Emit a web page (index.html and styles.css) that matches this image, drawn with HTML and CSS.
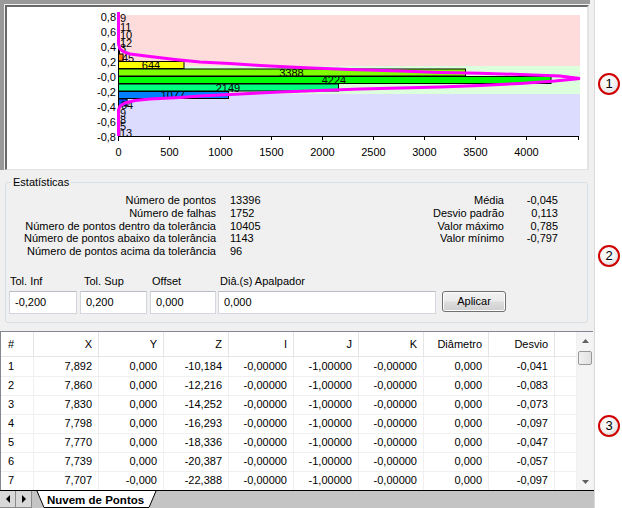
FILE: index.html
```html
<!DOCTYPE html>
<html lang="pt">
<head>
<meta charset="utf-8">
<title>Nuvem de Pontos</title>
<link rel="stylesheet" href="styles.css">
</head>
<body>
<div class="screen">
  <div class="app">
    <div class="chart-pane">
      <div class="chart-box">
        <svg class="chart" width="580" height="162" viewBox="7 7 580 162">
          <rect x="118" y="15" width="462" height="51" fill="#ffdcdc"/>
          <rect x="118" y="66" width="462" height="28" fill="#dcffdc"/>
          <rect x="118" y="94" width="462" height="42" fill="#dcdcff"/>
          <g stroke="#000" stroke-width="1">
            <rect x="118.5" y="16.5" width="1" height="7" fill="#ff4000"/>
            <rect x="118.5" y="24" width="1" height="7" fill="#ff4000"/>
            <rect x="118.5" y="31.5" width="1" height="7" fill="#ff4000"/>
            <rect x="118.5" y="39" width="1" height="7" fill="#ff4000"/>
            <rect x="118.5" y="46.5" width="1" height="7" fill="#ff6000"/>
            <rect x="118.5" y="54" width="4.6" height="7" fill="#ff8000"/>
            <rect x="118.5" y="61.5" width="65.5" height="7" fill="#ffff00"/>
            <rect x="118.5" y="69" width="347" height="7" fill="#80ff00"/>
            <rect x="118.5" y="76.5" width="432.5" height="7" fill="#00ff00"/>
            <rect x="118.5" y="84" width="220" height="7" fill="#00ff80"/>
            <rect x="118.5" y="91.5" width="110" height="7" fill="#0080ff"/>
            <rect x="118.5" y="99" width="8.6" height="7" fill="#0050ff"/>
            <rect x="118.5" y="106.5" width="1" height="7" fill="#0040ff"/>
            <rect x="118.5" y="114" width="1" height="7" fill="#0030ff"/>
            <rect x="118.5" y="121.5" width="1" height="7" fill="#0020ff"/>
            <rect x="118.5" y="129" width="1.3" height="7" fill="#0000ff"/>
          </g>
          <g class="bar-label">
            <text x="120" y="22">9</text>
            <text x="120" y="31">11</text>
            <text x="120" y="39">10</text>
            <text x="120" y="47">12</text>
            <text x="120" y="52">3</text>
            <text x="122" y="62">45</text>
            <text x="151" y="69" text-anchor="middle">644</text>
            <text x="291.5" y="77" text-anchor="middle">3388</text>
            <text x="334" y="84" text-anchor="middle">4224</text>
            <text x="228" y="92" text-anchor="middle">2149</text>
            <text x="173" y="99" text-anchor="middle">1077</text>
            <text x="121" y="109">84</text>
            <text x="120" y="117">9</text>
            <text x="120" y="124">8</text>
            <text x="120" y="130">5</text>
            <text x="120" y="137">13</text>
          </g>
          <polyline fill="none" stroke="#ff00ff" stroke-width="3"
            points="118.5,12 118.5,44 120,49 124,52 130,54 150,56.5 175,59.5 200,62 230,63.5 260,65.5 300,67.5 350,69.5 400,71 440,72.5 480,73.2 520,74.5 560,76 580,78.5 555,81 520,83.5 480,85.5 440,87 400,88 360,89 320,90.5 280,92 250,93.5 220,95 200,96 180,97.5 150,99 135,100.5 125,103 120,106 118.5,110 118.5,136"/>
          <g stroke="#000" stroke-width="1">
            <line x1="118" y1="136.5" x2="579" y2="136.5"/>
            <line x1="118.5" y1="136" x2="118.5" y2="141"/>
            <line x1="169.5" y1="136" x2="169.5" y2="140"/>
            <line x1="220.5" y1="136" x2="220.5" y2="140"/>
            <line x1="271.5" y1="136" x2="271.5" y2="140"/>
            <line x1="322.5" y1="136" x2="322.5" y2="140"/>
            <line x1="373.5" y1="136" x2="373.5" y2="140"/>
            <line x1="424.5" y1="136" x2="424.5" y2="140"/>
            <line x1="475.5" y1="136" x2="475.5" y2="140"/>
            <line x1="526.5" y1="136" x2="526.5" y2="140"/>
            <line x1="578.5" y1="136" x2="578.5" y2="140"/>
          </g>
          <g class="axis-label" text-anchor="end">
            <text x="116" y="20.5">0,8</text>
            <text x="116" y="35.5">0,6</text>
            <text x="116" y="50.5">0,4</text>
            <text x="116" y="65.5">0,2</text>
            <text x="116" y="80.5">-0,0</text>
            <text x="116" y="95.5">-0,2</text>
            <text x="116" y="110.5">-0,4</text>
            <text x="116" y="125.5">-0,6</text>
            <text x="116" y="140.5">-0,8</text>
          </g>
          <g class="axis-label" text-anchor="middle">
            <text x="118.5" y="156">0</text>
            <text x="169.5" y="156">500</text>
            <text x="220.5" y="156">1000</text>
            <text x="271.5" y="156">1500</text>
            <text x="322.5" y="156">2000</text>
            <text x="373.5" y="156">2500</text>
            <text x="424.5" y="156">3000</text>
            <text x="475.5" y="156">3500</text>
            <text x="526.5" y="156">4000</text>
          </g>
        </svg>
      </div>
    </div>

    <div class="stats-pane">
      <fieldset class="group">
        <legend>Estatísticas</legend>
        <div class="stats">
          <div class="stats-left">
            <span class="lbl">Número de pontos</span><span class="val">13396</span>
            <span class="lbl">Número de falhas</span><span class="val">1752</span>
            <span class="lbl">Número de pontos dentro da tolerância</span><span class="val">10405</span>
            <span class="lbl">Número de pontos abaixo da tolerância</span><span class="val">1143</span>
            <span class="lbl">Número de pontos acima da tolerância</span><span class="val">96</span>
          </div>
          <div class="stats-right">
            <span class="lbl">Média</span><span class="val">-0,045</span>
            <span class="lbl">Desvio padrão</span><span class="val">0,113</span>
            <span class="lbl">Valor máximo</span><span class="val">0,785</span>
            <span class="lbl">Valor mínimo</span><span class="val">-0,797</span>
          </div>
        </div>
        <div class="fields">
          <label class="field f1"><span class="flabel">Tol. Inf</span><span class="input">-0,200</span></label>
          <label class="field f2"><span class="flabel">Tol. Sup</span><span class="input">0,200</span></label>
          <label class="field f3"><span class="flabel">Offset</span><span class="input">0,000</span></label>
          <label class="field f4"><span class="flabel">Diâ.(s) Apalpador</span><span class="input">0,000</span></label>
          <button class="btn" type="button">Aplicar</button>
        </div>
      </fieldset>
    </div>

    <div class="table-pane">
      <div class="grid">
        <div class="row head">
          <div class="c first">#</div><div class="c">X</div><div class="c">Y</div><div class="c">Z</div><div class="c">I</div><div class="c">J</div><div class="c">K</div><div class="c">Diâmetro</div><div class="c">Desvio</div><div class="c fill"></div>
        </div>
        <div class="row">
          <div class="c first">1</div><div class="c">7,892</div><div class="c">0,000</div><div class="c">-10,184</div><div class="c">-0,00000</div><div class="c">-1,00000</div><div class="c">-0,00000</div><div class="c">0,000</div><div class="c">-0,041</div><div class="c fill"></div>
        </div>
        <div class="row">
          <div class="c first">2</div><div class="c">7,860</div><div class="c">0,000</div><div class="c">-12,216</div><div class="c">-0,00000</div><div class="c">-1,00000</div><div class="c">-0,00000</div><div class="c">0,000</div><div class="c">-0,083</div><div class="c fill"></div>
        </div>
        <div class="row">
          <div class="c first">3</div><div class="c">7,830</div><div class="c">0,000</div><div class="c">-14,252</div><div class="c">-0,00000</div><div class="c">-1,00000</div><div class="c">-0,00000</div><div class="c">0,000</div><div class="c">-0,073</div><div class="c fill"></div>
        </div>
        <div class="row">
          <div class="c first">4</div><div class="c">7,798</div><div class="c">0,000</div><div class="c">-16,293</div><div class="c">-0,00000</div><div class="c">-1,00000</div><div class="c">-0,00000</div><div class="c">0,000</div><div class="c">-0,097</div><div class="c fill"></div>
        </div>
        <div class="row">
          <div class="c first">5</div><div class="c">7,770</div><div class="c">0,000</div><div class="c">-18,336</div><div class="c">-0,00000</div><div class="c">-1,00000</div><div class="c">-0,00000</div><div class="c">0,000</div><div class="c">-0,047</div><div class="c fill"></div>
        </div>
        <div class="row">
          <div class="c first">6</div><div class="c">7,739</div><div class="c">0,000</div><div class="c">-20,387</div><div class="c">-0,00000</div><div class="c">-1,00000</div><div class="c">-0,00000</div><div class="c">0,000</div><div class="c">-0,057</div><div class="c fill"></div>
        </div>
        <div class="row">
          <div class="c first">7</div><div class="c">7,707</div><div class="c">-0,000</div><div class="c">-22,388</div><div class="c">-0,00000</div><div class="c">-1,00000</div><div class="c">-0,00000</div><div class="c">0,000</div><div class="c">-0,097</div><div class="c fill"></div>
        </div>
      </div>
      <div class="vscroll">
        <div class="sb-btn"><svg width="7" height="4" viewBox="0 0 7 4"><path d="M0 4 L3.5 0 L7 4 Z" fill="#606060"/></svg></div>
        <div class="sb-track"><div class="sb-thumb"></div></div>
        <div class="sb-btn"><svg width="7" height="4" viewBox="0 0 7 4"><path d="M0 0 L3.5 4 L7 0 Z" fill="#606060"/></svg></div>
      </div>
    </div>

    <div class="tabbar">
      <div class="nav"><svg width="6" height="8" viewBox="0 0 6 8"><path d="M5 0 L1 4 L5 8 Z" fill="#000"/></svg></div>
      <div class="nav"><svg width="6" height="8" viewBox="0 0 6 8"><path d="M1 0 L5 4 L1 8 Z" fill="#000"/></svg></div>
      <svg class="tab" width="124" height="17" viewBox="0 0 124 17">
        <polygon points="1,0 8,17 113,17 120,0" fill="#fff"/>
        <polyline points="1,0 8,16.5 113,16.5 120,0" fill="none" stroke="#000" stroke-width="1"/>
        <text x="11" y="13" class="tab-text">Nuvem de Pontos</text>
      </svg>
    </div>
  </div>

  <div class="callouts">
    <div class="badge b1">1</div>
    <div class="badge b2">2</div>
    <div class="badge b3">3</div>
  </div>
</div>
</body>
</html>
```

FILE: styles.css
```css
* { box-sizing: border-box; }
html, body { margin: 0; padding: 0; }
body {
  width: 622px;
  height: 508px;
  overflow: hidden;
  background: #fff;
  font-family: "Liberation Sans", Arial, sans-serif;
  font-size: 11px;
  color: #000;
}
.screen { display: flex; height: 508px; }
.app {
  width: 595px;
  height: 508px;
  display: flex;
  flex-direction: column;
  background: #f0f0f0;
  border-right: 1px solid #dadada;
}

/* chart */
.chart-pane {
  height: 170px;
  width: 590px;
  border-top: 4px solid #9a9a9a;
  border-left: 4px solid #9a9a9a;
  padding: 1px 1px 0 1px;
  background: #f0f0f0;
}
.chart-box {
  height: 165px;
  border-top: 2px solid #696969;
  border-left: 2px solid #696969;
  border-right: 2px solid #e3e3e3;
  border-bottom: 1px solid #e3e3e3;
  background: #fff;
  overflow: hidden;
}
.chart { display: block; }
.bar-label text, .axis-label text {
  font-family: "Liberation Sans", Arial, sans-serif;
  font-size: 11px;
  fill: #000;
}

/* statistics */
.stats-pane {
  height: 161px;
  padding: 6px 6px 0 5px;
}
.group {
  margin: 0;
  padding: 5px 0 8px 0;
  border: 1px solid #d5dfe5;
  border-radius: 3px;
  height: 147px;
  min-width: 0;
}
.group legend {
  margin-left: 5px;
  padding: 0 2px;
  line-height: 13px;
}
.stats { display: flex; align-items: flex-start; }
.stats-left {
  display: grid;
  grid-template-columns: 210px auto;
  grid-auto-rows: 12.8px;
  column-gap: 14px;
  line-height: 12.8px;
}
.stats-left .lbl, .stats-right .lbl { text-align: right; }
.stats-right {
  margin-left: auto;
  margin-right: 29px;
  display: grid;
  grid-template-columns: auto 54px;
  grid-auto-rows: 12.8px;
  align-content: start;
  line-height: 12.8px;
}
.stats-right .val { text-align: right; }

.fields {
  display: flex;
  align-items: flex-end;
  margin-top: 17px;
  padding-left: 3px;
}
.field { display: flex; flex-direction: column; }
.flabel { line-height: 13px; margin-bottom: 3px; }
.f1 { width: 68px; }
.f1 .flabel { padding-left: 1px; }
.f2 { width: 67px; margin-left: 3px; }
.f2 .flabel { padding-left: 4px; }
.f3 { width: 66px; margin-left: 3px; }
.f3 .flabel { padding-left: 2px; }
.f4 { width: 218px; margin-left: 2px; }
.f4 .flabel { padding-left: 2px; }
.input {
  display: block;
  height: 23px;
  line-height: 21px;
  padding-left: 5px;
  background: #fff;
  border: 1px solid #d3d7dd;
  border-top-color: #b9bdc4;
}
.btn {
  width: 64px;
  height: 21px;
  margin-left: 6px;
  margin-bottom: 2px;
  padding: 0;
  font-family: "Liberation Sans", Arial, sans-serif;
  font-size: 11px;
  color: #000;
  border: 1px solid #707070;
  border-radius: 3px;
  background: linear-gradient(#f2f2f2 0%, #ebebeb 48%, #dddddd 52%, #cfcfcf 100%);
  box-shadow: inset 0 0 0 1px #fcfcfc;
}

/* table */
.table-pane {
  height: 159px;
  display: flex;
  border-top: 1px solid #828790;
  border-left: 1px solid #828790;
  background: #fff;
  margin-right: 1px;
}
.grid { width: 576px; overflow: hidden; }
.row {
  display: grid;
  grid-template-columns: 33px repeat(7, 65px) 66px 22px;
  height: 19px;
}
.row.head { height: 25px; border-bottom: 1px solid #e5e5e5; }
.c {
  text-align: right;
  padding-right: 6px;
  line-height: 19px;
  border-right: 1px solid #f0f0f0;
  border-bottom: 1px solid #f0f0f0;
  white-space: nowrap;
}
.row.head .c {
  line-height: 24px;
  border-bottom: none;
  border-right-color: #e5e5e5;
}
.c.first { text-align: left; padding-left: 7px; padding-right: 0; }
.c.fill { border-right: none; }

.vscroll {
  width: 17px;
  display: flex;
  flex-direction: column;
  background: #f4f4f4;
  border-left: 1px solid #f0f0f0;
}
.sb-btn {
  height: 17px;
  display: flex;
  align-items: center;
  justify-content: center;
}
.sb-track { flex: 1; padding-top: 2px; }
.sb-thumb {
  height: 14px;
  margin: 0 1px;
  border: 1px solid #979797;
  border-radius: 2px;
  background: linear-gradient(90deg, #f0f0f0, #e2e2e2);
}

/* tabs */
.tabbar {
  height: 18px;
  border-top: 1px solid #000;
  background: #c4c4c4;
  display: flex;
  align-items: flex-start;
}
.nav {
  width: 16px;
  height: 17px;
  display: flex;
  align-items: center;
  justify-content: center;
  background: #d8d8d8;
  border-right: 1px solid #8a8a8a;
  border-bottom: 1px solid #8a8a8a;
}
.tab { display: block; margin-left: 4px; }
.tab-text {
  font-family: "Liberation Sans", Arial, sans-serif;
  font-size: 11.5px;
  font-weight: bold;
  fill: #000;
}

/* callouts */
.callouts {
  flex: 1;
  display: flex;
  flex-direction: column;
  padding-top: 73px;
  padding-left: 3px;
}
.badge {
  width: 22px;
  height: 22px;
  border-radius: 50%;
  border: 2px solid #d00000;
  background: radial-gradient(circle at 40% 35%, #ffffff 0%, #f2f2f2 50%, #cfcfcf 100%);
  font-family: "Liberation Sans", Arial, sans-serif;
  font-size: 13px;
  line-height: 18px;
  text-align: center;
  color: #000;
}
.b2 { margin-top: 150px; }
.b3 { margin-top: 148px; }
```
